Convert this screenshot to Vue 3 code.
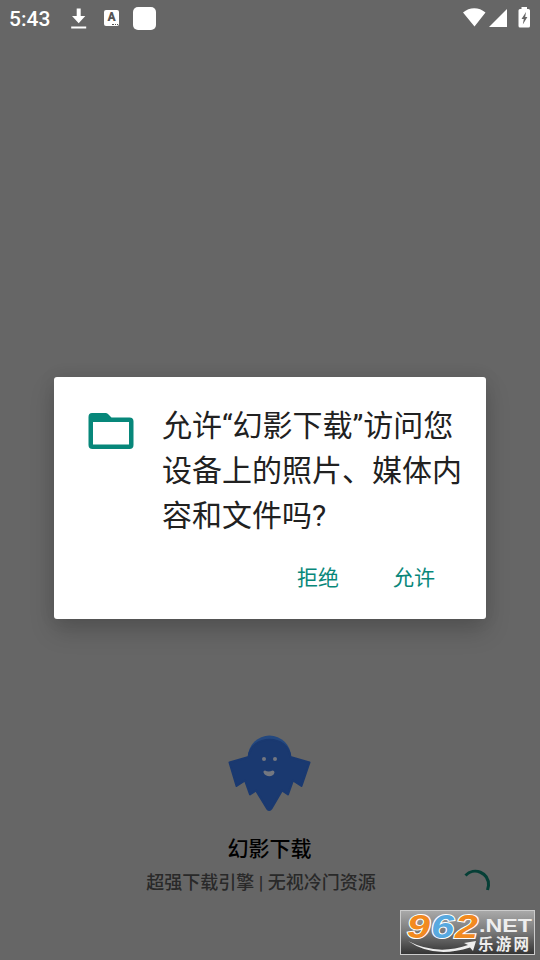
<script setup>
const lines = ['允许“幻影下载”访问您', '设备上的照片、媒体内', '容和文件吗?']
</script>

<template>
  <main class="screen">
    <header class="status">
      <span class="time">5:43</span>
      <svg class="download" width="18" height="24" viewBox="0 0 18 24" fill="#fff">
        <path d="M6.700 .5h4v7.500h4.600L8.700 15.200 2 8h4.700zM1.200 18.500h15v2h-15z" />
      </svg>
      <span class="badge">A<i></i></span>
      <span class="square"></span>
      <svg class="signals" width="69" height="26" viewBox="0 0 69 26" fill="#fff">
        <path d="M0 6.500C6.500 .8 16 .8 22.500 6.500L11.500 20.500zM26 21 44 3v18z" />
        <path fill-rule="evenodd" d="M58.500 1h5.500v2h1.500q1.500 0 1.500 1.500v15.500q0 1.500-1.500 1.500h-8.500q-1.500 0-1.500-1.500v-15.500q0-1.500 1.500-1.500h1.500zM63 6 58.500 13h2.300l-1 5.500 4.600-7.500h-2.200z" />
      </svg>
    </header>

    <section class="dialog">
      <div class="message">
        <svg class="folder" width="46" height="38" viewBox="0 0 46 38">
          <path fill="#07877a" fill-rule="evenodd" d="M4 1h13.500q1.500 0 2.500 1l3.500 3.500H41.500q4 0 4 4V33q0 4-4 4H4.500q-4 0-4-4V5Q.5 1 4 1zM5 10v22.500h36V10z" />
        </svg>
        <h1><span v-for="line in lines" :key="line">{{ line }}</span></h1>
      </div>
      <div class="actions"><button>拒绝</button><button>允许</button></div>
    </section>

    <section class="brand">
      <svg class="ghost" width="84" height="76" viewBox="0 0 84 76">
        <circle cx="41.500" cy="22" r="21.500" fill="#24487f" />
        <path fill="#1a3970" stroke="#1a3970" stroke-width="2" stroke-linejoin="round" d="M1.500 27.500 20.500 22C23-1 60-1 62.500 22l19 5.500-8 23.500-8.500-5.500-5 14-6-4-10.500 18q-2 3-4.500 0L28 55.500l-6 4-5-14-8.500 5.500z" />
        <circle cx="36" cy="24" r="2" fill="#737780" />
        <circle cx="47" cy="24" r="2" fill="#737780" />
        <path fill="#737780" d="M37 35.500q-2 0-1.500 2c2 5 10 5 11 0q0-2-2-2-4 2-7.500 0z" />
      </svg>
      <h2>幻影下载</h2>
      <p>超强下载引擎 | 无视冷门资源</p>
    </section>

    <svg class="spinner" width="32" height="32" viewBox="0 0 32 32" fill="none">
      <path d="M4.500 8.500C13-.5 28 5.500 27.500 18.500L26.500 23" stroke="#063f36" stroke-width="3" />
    </svg>
    <div class="watermark">
      <svg width="135" height="45" viewBox="0 0 135 45">
        <defs>
          <linearGradient id="plate" x2="0" y2="1"><stop stop-color="#aaa" /><stop offset=".5" stop-color="#777" /><stop offset="1" stop-color="#333" /></linearGradient>
        </defs>
        <rect x=".5" y=".5" width="134" height="44" fill="url(#plate)" stroke="#ccc" />
        <g class="digits"><text x="7" y="28" textLength="23" lengthAdjust="spacingAndGlyphs" fill="#f28a20">9</text><text x="31" y="28" textLength="23" lengthAdjust="spacingAndGlyphs" fill="#58a9df">6</text><text x="55" y="28" textLength="23" lengthAdjust="spacingAndGlyphs" fill="#f28a20">2</text></g>
        <text class="domain" x="79" y="21.500" textLength="53" lengthAdjust="spacingAndGlyphs">.NET</text>
        <text class="name" x="78" y="40" textLength="51">乐游网</text>
        <path d="M8 31Q37 46 68 35L64 33 76 31 73 41 70 37.500Q34 49 8 31z" fill="#eee" />
      </svg>
    </div>
  </main>
</template>

<style>
body { margin: 0; }
</style>
<style scoped>
.screen { position: relative; box-sizing: border-box; width: 540px; height: 960px; overflow: hidden; background: #666; font-family: Roboto, "Noto Sans CJK SC", sans-serif; }
.status { display: flex; height: 40px; color: #fff; }
.time { width: 42px; margin-left: 9px; padding-top: 7px; font-size: 21px; line-height: 24px; font-weight: 500; }
.download { margin: 8px 0 0 19px; }
.badge { position: relative; width: 15px; height: 16px; margin: 10px 0 0 16px; border-radius: 2px; background: #fff; color: #555; font-size: 12px; font-weight: 900; line-height: 15px; text-align: center; }
.badge i { position: absolute; right: 1px; bottom: 1px; width: 6px; border-bottom: 1px dotted #555; }
.square { width: 23px; height: 23px; margin: 7px 0 0 14px; border-radius: 5px; background: #fff; }
.signals { margin: 6px 8px 0 auto; }
.dialog { box-sizing: border-box; width: 432px; height: 242px; margin: 337px 54px 0; padding: 27px 20px 0 34px; border-radius: 3px; background: #fff; box-shadow: 0 12px 24px rgba(0,0,0,.18), 0 0 18px rgba(0,0,0,.08); }
.message { display: flex; }
.folder { margin-top: 8px; }
h1 { margin: -1px 0 0 28px; color: #212121; font-size: 30px; line-height: 45px; font-weight: 400; white-space: nowrap; }
h1 span { display: block; }
.actions { display: flex; justify-content: flex-end; gap: 54px; padding: 25px 31px 0 0; }
button { padding: 0; border: 0; background: none; color: #08877a; font: 400 21px/30px Roboto, "Noto Sans CJK SC", sans-serif; }
.brand { display: flex; flex-direction: column; align-items: center; margin-top: 116px; padding-right: 1px; }
.ghost { display: block; }
h2 { margin: 23px 0 0; color: #000; font-size: 21px; line-height: 30px; font-weight: 500; }
p { margin: 6px 0 0; padding-right: 17px; color: #292929; font-size: 18px; line-height: 26px; font-weight: 500; white-space: pre; }
.spinner { position: absolute; left: 461px; top: 867px; }
.watermark { position: absolute; left: 400px; top: 910px; }
.watermark svg { display: block; }
.digits { font: italic 700 34px "Liberation Sans", sans-serif; stroke: #fff; stroke-width: 2px; paint-order: stroke; }
.domain { font: 700 18px "Liberation Sans", sans-serif; fill: #eee; }
.name { font: 700 15.5px "Noto Sans CJK SC", sans-serif; fill: #eee; }
</style>
